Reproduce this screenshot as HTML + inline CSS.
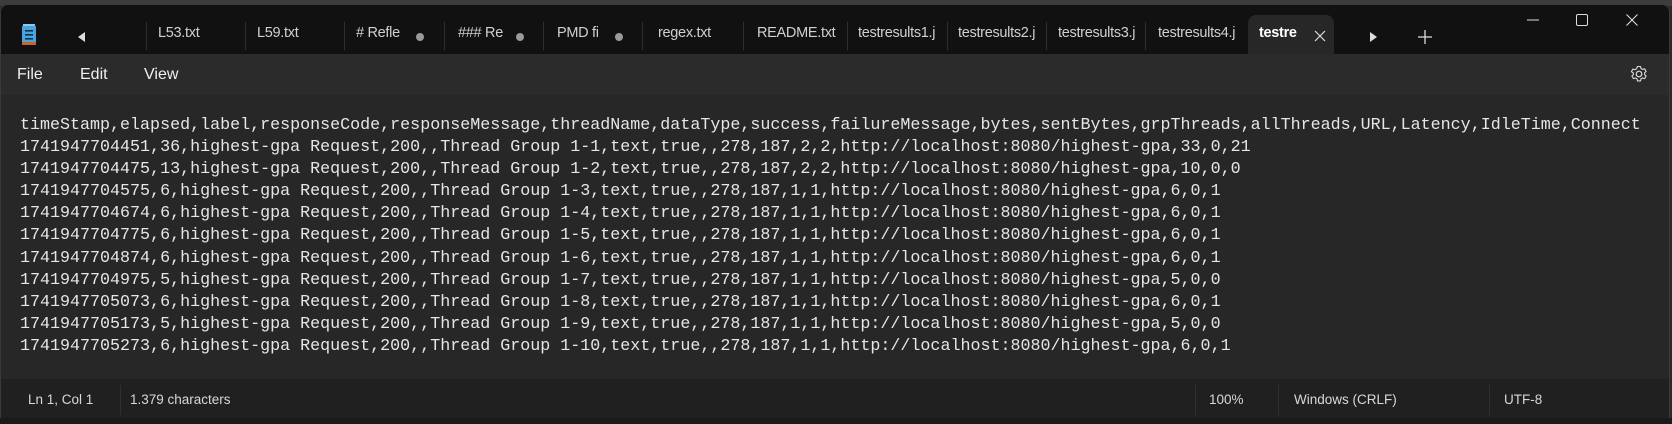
<!DOCTYPE html>
<html><head><meta charset="utf-8"><style>
*{margin:0;padding:0;box-sizing:border-box}
body{width:1672px;height:424px;background:#2a2a2a;overflow:hidden;position:relative;font-family:"Liberation Sans",sans-serif}
.top{position:absolute;left:0;top:0;width:1672px;height:6px;background:#3c3c3c}
.win{position:absolute;left:0;top:4px;width:1670px;height:416px;background:#272727;border-radius:8px 8px 0 0;overflow:hidden;border:1px solid #3a3a3a}
.tabbar{position:absolute;left:0;top:0;width:100%;height:49px;background:#111111}
.t{position:absolute;top:20px;font-size:14.5px;color:#d0d0d0;white-space:nowrap;letter-spacing:-0.3px}
.sep{position:absolute;top:17px;width:1px;height:28px;background:#2e2e2e}
.dot{position:absolute;top:28px;width:8px;height:8px;border-radius:50%;background:#9a9a9a}
.active{position:absolute;left:1247px;top:10px;width:86px;height:40px;background:#272727;border-radius:8px 8px 0 0}
.menu{position:absolute;left:0;top:49px;width:100%;height:41px;background:#2b2b2b}
.m{position:absolute;top:12px;font-size:16px;color:#f0f0f0}
.ed{position:absolute;left:19px;top:110px;font-family:"Liberation Mono",monospace;font-size:16.68px;line-height:22.1px;color:#e6e6e6;white-space:pre}
.status{position:absolute;left:0;top:374px;width:100%;height:42px;background:#202020}
.s{position:absolute;top:13px;font-size:13.5px;color:#d8d8d8}
.ss{position:absolute;top:6px;width:1px;height:30px;background:#303030}
.bot{position:absolute;left:0;top:418px;width:1672px;height:6px;background:#1a1a1a}
</style></head><body>
<div class="top"></div>
<div class="win">
 <div class="tabbar">
  <svg style="position:absolute;left:21px;top:19px" width="14" height="22"><rect x="0" y="2" width="14" height="18" fill="#4aa3df"/><rect x="0" y="18" width="14" height="3" fill="#c9632b"/><rect x="3" y="6" width="8" height="1.6" fill="#134"/><rect x="3" y="10" width="8" height="1.6" fill="#134"/><rect x="3" y="14" width="8" height="1.6" fill="#134"/><rect x="1" y="0" width="12" height="2" fill="#8cc8f0"/></svg>
  <svg style="position:absolute;left:77px;top:27px" width="8" height="10"><path d="M7 0L0 5L7 10Z" fill="#ddd"/></svg>
  <div class="sep" style="left:145px"></div><div class="t" style="left:157px">L53.txt</div>
  <div class="sep" style="left:244px"></div><div class="t" style="left:256px">L59.txt</div>
  <div class="sep" style="left:343px"></div><div class="t" style="left:355px">#&nbsp;Refle</div><div class="dot" style="left:415px"></div>
  <div class="sep" style="left:443px"></div><div class="t" style="left:457px">###&nbsp;Re</div><div class="dot" style="left:515px"></div>
  <div class="sep" style="left:542px"></div><div class="t" style="left:556px">PMD fi</div><div class="dot" style="left:614px"></div>
  <div class="sep" style="left:641px"></div><div class="t" style="left:657px">regex.txt</div>
  <div class="sep" style="left:742px"></div><div class="t" style="left:756px">README.txt</div>
  <div class="sep" style="left:846px"></div><div class="t" style="left:857px">testresults1.j</div>
  <div class="sep" style="left:946px"></div><div class="t" style="left:957px">testresults2.j</div>
  <div class="sep" style="left:1045px"></div><div class="t" style="left:1057px">testresults3.j</div>
  <div class="sep" style="left:1144px"></div><div class="t" style="left:1157px">testresults4.j</div>
  <div class="active"></div>
  <div class="t" style="left:1258px;color:#fff;font-weight:bold">testre</div>
  <svg style="position:absolute;left:1313px;top:25px" width="12" height="12"><path d="M1 1L11 11M11 1L1 11" stroke="#ddd" stroke-width="1.2"/></svg>
  <svg style="position:absolute;left:1369px;top:27px" width="8" height="10"><path d="M0 0L7 5L0 10Z" fill="#ddd"/></svg>
  <svg style="position:absolute;left:1417px;top:25px" width="14" height="14"><path d="M7 0V14M0 7H14" stroke="#ddd" stroke-width="1.3"/></svg>
  <svg style="position:absolute;left:1526px;top:14px" width="12" height="2"><path d="M0 1H12" stroke="#ddd"/></svg>
  <svg style="position:absolute;left:1575px;top:9px" width="12" height="12"><rect x="0.5" y="0.5" width="11" height="11" rx="1.5" fill="none" stroke="#ddd"/></svg>
  <svg style="position:absolute;left:1625px;top:9px" width="12" height="12"><path d="M0.5 0.5L11.5 11.5M11.5 0.5L0.5 11.5" stroke="#ddd" stroke-width="1.1"/></svg>
 </div>
 <div class="menu">
  <div class="m" style="left:16px">File</div>
  <div class="m" style="left:79px">Edit</div>
  <div class="m" style="left:143px">View</div>
  <svg style="position:absolute;left:1629px;top:11px" width="18" height="18" viewBox="0 0 18 18"><circle cx="9" cy="9" r="2.8" fill="none" stroke="#ddd" stroke-width="1.2"/><path d="M7.5 1.5h3l.5 2 1.6.9 2-.6 1.5 2.6-1.5 1.4v1.8l1.5 1.4-1.5 2.6-2-.6-1.6.9-.5 2h-3l-.5-2-1.6-.9-2 .6-1.5-2.6 1.5-1.4V8.1L1.4 6.7l1.5-2.6 2 .6 1.6-.9z" fill="none" stroke="#ddd" stroke-width="1.1" stroke-linejoin="round"/></svg>
 </div>
 <div class="ed">timeStamp,elapsed,label,responseCode,responseMessage,threadName,dataType,success,failureMessage,bytes,sentBytes,grpThreads,allThreads,URL,Latency,IdleTime,Connect
1741947704451,36,highest-gpa Request,200,,Thread Group 1-1,text,true,,278,187,2,2,http://localhost:8080/highest-gpa,33,0,21
1741947704475,13,highest-gpa Request,200,,Thread Group 1-2,text,true,,278,187,2,2,http://localhost:8080/highest-gpa,10,0,0
1741947704575,6,highest-gpa Request,200,,Thread Group 1-3,text,true,,278,187,1,1,http://localhost:8080/highest-gpa,6,0,1
1741947704674,6,highest-gpa Request,200,,Thread Group 1-4,text,true,,278,187,1,1,http://localhost:8080/highest-gpa,6,0,1
1741947704775,6,highest-gpa Request,200,,Thread Group 1-5,text,true,,278,187,1,1,http://localhost:8080/highest-gpa,6,0,1
1741947704874,6,highest-gpa Request,200,,Thread Group 1-6,text,true,,278,187,1,1,http://localhost:8080/highest-gpa,6,0,1
1741947704975,5,highest-gpa Request,200,,Thread Group 1-7,text,true,,278,187,1,1,http://localhost:8080/highest-gpa,5,0,0
1741947705073,6,highest-gpa Request,200,,Thread Group 1-8,text,true,,278,187,1,1,http://localhost:8080/highest-gpa,6,0,1
1741947705173,5,highest-gpa Request,200,,Thread Group 1-9,text,true,,278,187,1,1,http://localhost:8080/highest-gpa,5,0,0
1741947705273,6,highest-gpa Request,200,,Thread Group 1-10,text,true,,278,187,1,1,http://localhost:8080/highest-gpa,6,0,1</div>
 <div class="status">
  <div class="s" style="left:27px">Ln 1, Col 1</div>
  <div class="ss" style="left:119px"></div>
  <div class="s" style="left:129px">1.379 characters</div>
  <div class="ss" style="left:1194px"></div>
  <div class="s" style="left:1208px">100%</div>
  <div class="ss" style="left:1277px"></div>
  <div class="s" style="left:1293px">Windows (CRLF)</div>
  <div class="ss" style="left:1488px"></div>
  <div class="s" style="left:1503px">UTF-8</div>
 </div>
</div>
<div class="bot"></div>
</body></html>
